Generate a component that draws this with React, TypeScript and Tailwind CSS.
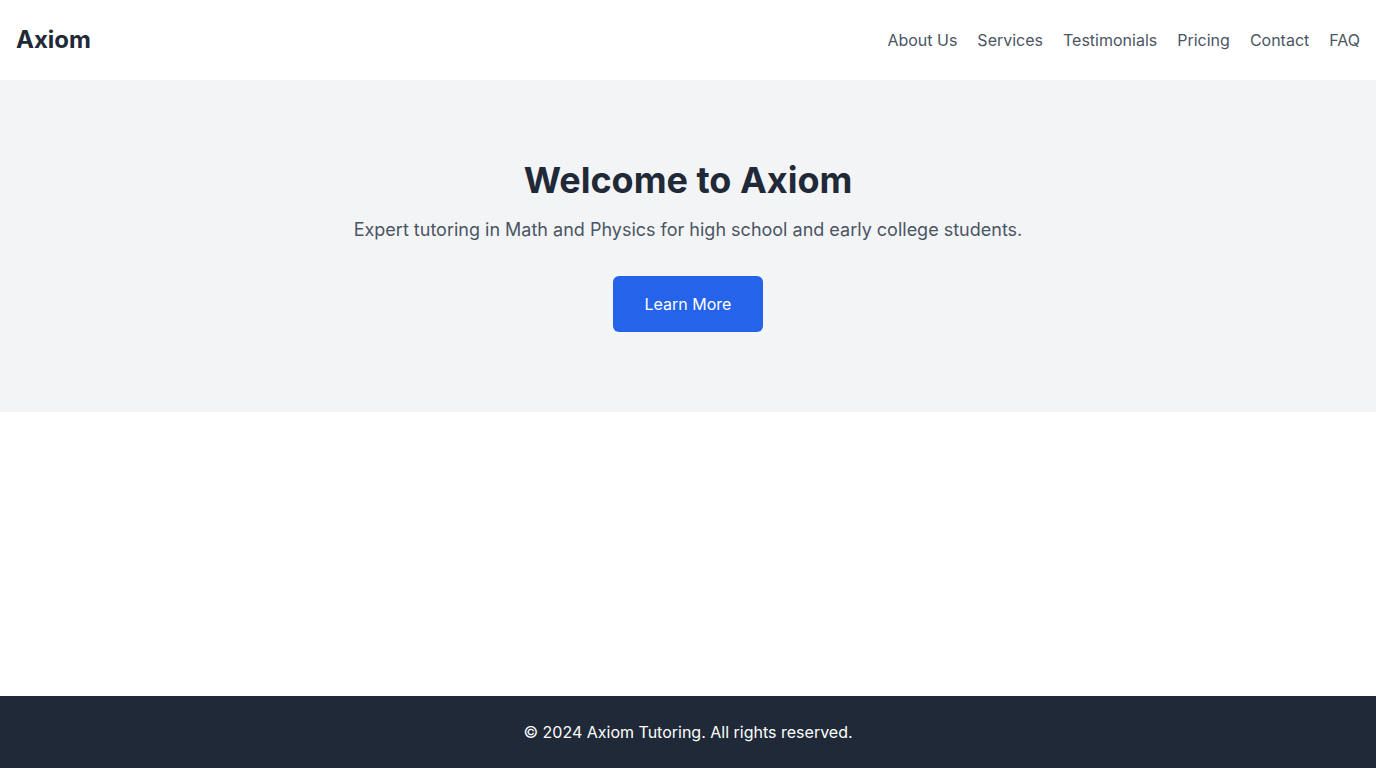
import React from "react";

export default function App() {
  const links = ["About Us", "Services", "Testimonials", "Pricing", "Contact", "FAQ"];
  return (
    <div className="min-h-screen flex flex-col bg-white" style={{ fontFamily: "Inter, 'Noto Sans', sans-serif" }}>
      <header className="flex items-center justify-between px-4 py-6 bg-white">
        <div className="text-2xl font-bold text-[#1f2937]">Axiom</div>
        <nav className="flex gap-5">
          {links.map((l) => (
            <a key={l} href="#" className="text-base text-[#4b5563]">
              {l}
            </a>
          ))}
        </nav>
      </header>
      <section className="bg-[#f3f4f6] py-20 text-center">
        <h1 className="text-4xl font-bold text-[#1f2937] mb-4">Welcome to Axiom</h1>
        <p className="text-lg text-[#4b5563] mb-8">
          Expert tutoring in Math and Physics for high school and early college students.
        </p>
        <button className="bg-[#2563eb] text-white px-8 py-4 rounded-md text-base">Learn More</button>
      </section>
      <main className="flex-1"></main>
      <footer className="bg-[#1f2937] text-white text-center py-6 text-base">
        © 2024 Axiom Tutoring. All rights reserved.
      </footer>
    </div>
  );
}
